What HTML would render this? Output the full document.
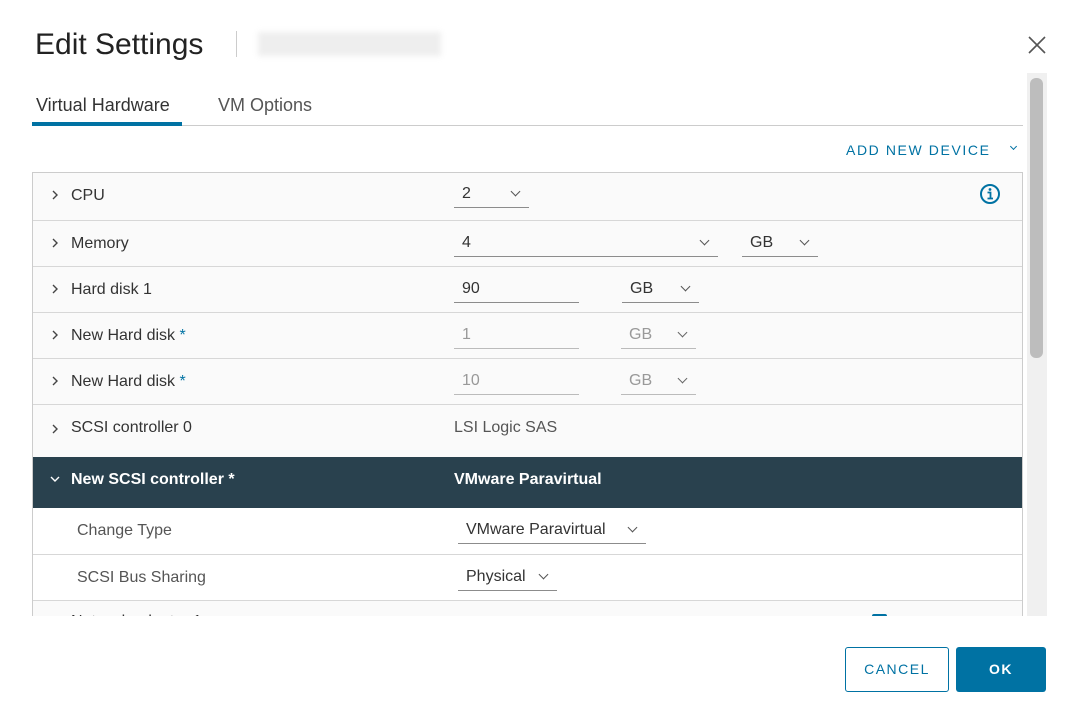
<!DOCTYPE html>
<html><head><style>
*{box-sizing:border-box;margin:0;padding:0}
body{width:1076px;height:722px;background:#fff;font-family:"Liberation Sans",sans-serif;color:#333;position:relative;overflow:hidden}
.abs{position:absolute}
.row{position:absolute;left:32px;width:991px;border-top:1px solid #d7d7d7;background:#fafafa}
.lbl{position:absolute;left:38px;font-size:16px;color:#333}
.chev{position:absolute;left:18px;width:8px;height:12px}
.sel{position:absolute;border-bottom:1px solid #8c8c8c;font-size:16px;height:26px;line-height:24px;padding-left:8px}
.sel.d{color:#999;border-color:#bbb}
.arr{position:absolute;right:10px;top:6px;width:7px;height:7px;border-right:1.5px solid #555;border-bottom:1.5px solid #555;transform:rotate(45deg)}
.d .arr{border-color:#666}
.star{color:#0072a3}
</style></head><body>
<div class="abs" style="left:35px;top:28px;font-size:30px;color:#222">Edit Settings</div>
<div class="abs" style="left:236px;top:31px;width:1px;height:26px;background:#ccc"></div>
<div class="abs" style="left:258px;top:32px;width:183px;height:24px;background:#eee;filter:blur(3px)"></div>
<svg class="abs" style="left:1028px;top:36px" width="18" height="18" viewBox="0 0 18 18"><path d="M1 1L17 17M17 1L1 17" stroke="#555" stroke-width="1.6"/></svg>
<div class="abs" style="left:36px;top:95px;font-size:18px;color:#333">Virtual Hardware</div>
<div class="abs" style="left:218px;top:95px;font-size:18px;color:#555">VM Options</div>
<div class="abs" style="left:32px;top:125px;width:991px;height:1px;background:#ccc"></div>
<div class="abs" style="left:32px;top:122px;width:150px;height:4px;background:#0072a3"></div>
<div class="abs" style="left:846px;top:142px;font-size:14px;letter-spacing:1.6px;color:#0072a3">ADD NEW DEVICE</div>
<div class="abs" style="left:1011px;top:144px;width:5px;height:5px;border-right:1.5px solid #0072a3;border-bottom:1.5px solid #0072a3;transform:rotate(45deg)"></div>
<div class="abs" style="left:1027px;top:73px;width:20px;height:543px;background:#f0f0f0"></div>
<div class="abs" style="left:1030px;top:78px;width:13px;height:280px;background:#bdbdbd;border-radius:6px"></div>
<div class="abs" style="left:32px;top:172px;width:991px;height:444px;overflow:hidden;border:1px solid #ccc;border-bottom:none;border-right:none">
 <div class="row" style="top:0;left:0;height:48px;border-top:none"><svg class="chev" style="top:16px" viewBox="0 0 8 12"><path d="M2 2l4 4-4 4" stroke="#444" stroke-width="1.4" fill="none"/></svg><span class="lbl" style="top:14px">CPU</span>
  <div class="sel" style="left:421px;top:9px;width:75px">2<span class="arr"></span></div>
  <svg class="abs" style="left:946px;top:10px" width="22" height="22" viewBox="0 0 22 22"><circle cx="11" cy="11" r="9" fill="none" stroke="#0072a3" stroke-width="2"/><circle cx="11" cy="6.5" r="1.4" fill="#0072a3"/><path d="M8.5 9.5h3v6M8.5 15.5h5.5" stroke="#0072a3" stroke-width="1.8" fill="none"/></svg></div>
 <div class="row" style="top:47px;left:0;height:46px"><svg class="chev" style="top:16px" viewBox="0 0 8 12"><path d="M2 2l4 4-4 4" stroke="#444" stroke-width="1.4" fill="none"/></svg><span class="lbl" style="top:14px">Memory</span>
  <div class="sel" style="left:421px;top:10px;width:264px">4<span class="arr"></span></div>
  <div class="sel" style="left:709px;top:10px;width:76px">GB<span class="arr"></span></div></div>
 <div class="row" style="top:93px;left:0;height:46px"><svg class="chev" style="top:16px" viewBox="0 0 8 12"><path d="M2 2l4 4-4 4" stroke="#444" stroke-width="1.4" fill="none"/></svg><span class="lbl" style="top:14px">Hard disk 1</span>
  <div class="sel" style="left:421px;top:10px;width:125px">90</div>
  <div class="sel" style="left:589px;top:10px;width:77px">GB<span class="arr"></span></div></div>
 <div class="row" style="top:139px;left:0;height:46px"><svg class="chev" style="top:16px" viewBox="0 0 8 12"><path d="M2 2l4 4-4 4" stroke="#444" stroke-width="1.4" fill="none"/></svg><span class="lbl" style="top:14px">New Hard disk <span class="star">*</span></span>
  <div class="sel d" style="left:421px;top:10px;width:125px">1</div>
  <div class="sel d" style="left:588px;top:10px;width:75px">GB<span class="arr"></span></div></div>
 <div class="row" style="top:185px;left:0;height:46px"><svg class="chev" style="top:16px" viewBox="0 0 8 12"><path d="M2 2l4 4-4 4" stroke="#444" stroke-width="1.4" fill="none"/></svg><span class="lbl" style="top:14px">New Hard disk <span class="star">*</span></span>
  <div class="sel d" style="left:421px;top:10px;width:125px">10</div>
  <div class="sel d" style="left:588px;top:10px;width:75px">GB<span class="arr"></span></div></div>
 <div class="row" style="top:231px;left:0;height:53px"><svg class="chev" style="top:18px" viewBox="0 0 8 12"><path d="M2 2l4 4-4 4" stroke="#444" stroke-width="1.4" fill="none"/></svg><span class="lbl" style="top:14px">SCSI controller 0</span>
  <span class="abs" style="left:421px;top:14px;font-size:16px;color:#555">LSI Logic SAS</span></div>
 <div class="row" style="top:284px;left:0;height:51px;background:#29414e;border:none">
  <svg class="abs" style="left:16px;top:18px" width="12" height="8" viewBox="0 0 12 8"><path d="M2 2l4 4 4-4" stroke="#fff" stroke-width="1.4" fill="none"/></svg>
  <span class="lbl" style="top:14px;color:#fff;font-weight:bold">New SCSI controller *</span>
  <span class="abs" style="left:421px;top:14px;font-size:16px;color:#fff;font-weight:bold">VMware Paravirtual</span></div>
 <div class="row" style="top:335px;left:0;height:46px;background:#fff;border:none"><span class="lbl" style="left:44px;top:14px;color:#555">Change Type</span>
  <div class="sel" style="left:425px;top:10px;width:188px">VMware Paravirtual<span class="arr"></span></div></div>
 <div class="row" style="top:381px;left:0;height:46px;background:#fff"><span class="lbl" style="left:44px;top:14px;color:#555">SCSI Bus Sharing</span>
  <div class="sel" style="left:425px;top:10px;width:99px">Physical<span class="arr"></span></div></div>
 <div class="row" style="top:427px;left:0;height:46px"><span class="lbl" style="top:12px">Network adapter 1</span>
  <span class="abs" style="left:839px;top:13px;width:15px;height:15px;background:#0072a3;border-radius:2px"></span></div>
</div>
<div class="abs" style="left:1022px;top:172px;width:1px;height:444px;background:#ccc"></div>
<div class="abs" style="left:845px;top:647px;width:104px;height:45px;border:1px solid #0072a3;border-radius:3px;color:#0072a3;font-size:14px;letter-spacing:1.5px;text-align:center;line-height:43px">CANCEL</div>
<div class="abs" style="left:956px;top:647px;width:90px;height:45px;background:#0072a3;border-radius:3px;color:#fff;font-size:14px;font-weight:bold;letter-spacing:1.5px;text-align:center;line-height:45px">OK</div>
</body></html>
